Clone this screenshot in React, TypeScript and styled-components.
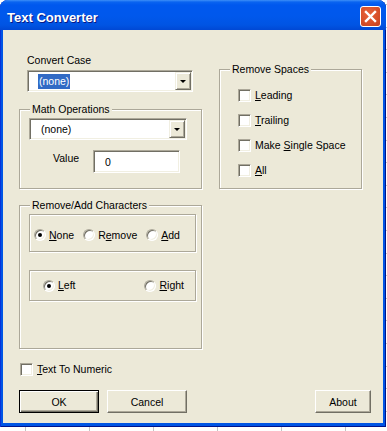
import React from "react";
import styled, { createGlobalStyle } from "styled-components";

const GlobalStyle = createGlobalStyle`
  html, body { margin: 0; padding: 0; }
  body {
    width: 387px;
    height: 431px;
    overflow: hidden;
    background-color: #fff;
    background-image:
      repeating-linear-gradient(to right, transparent 0 25px, #c4c4c4 25px 26px, transparent 26px 64px),
      repeating-linear-gradient(to bottom, transparent 0 4px, #c4c4c4 4px 5px, transparent 5px 22.6px);
    font-family: "Liberation Sans", Arial, sans-serif;
    font-size: 10.5px;
    color: #000;
  }
`;

const Window = styled.div`
  width: 386px;
  height: 427px;
  display: flex;
  flex-direction: column;
  background: #0055e5;
  border-radius: 8px 8px 0 0;
  box-shadow: inset 1px 0 0 #0831d9, inset -1px 0 0 #00138c, inset 0 -1px 0 #00138c;
  overflow: hidden;
`;

const TitleBar = styled.div`
  height: 30px;
  flex: none;
  display: flex;
  align-items: flex-start;
  justify-content: space-between;
  padding: 0 5px 0 7px;
  background: linear-gradient(
    180deg,
    #3d8ff7 0px,
    #0a64f0 2px,
    #0058ee 5px,
    #0058ec 16px,
    #0054e3 25px,
    #0048d4 30px
  );
`;

const Title = styled.div`
  margin-top: 10px;
  line-height: 16px;
  font-family: "Liberation Sans", Arial, sans-serif;
  font-weight: bold;
  font-size: 13px;
  color: #fff;
  text-shadow: 1px 1px 0 #0a1883;
`;

const CloseButton = styled.div`
  margin-top: 6px;
  width: 21px;
  height: 21px;
  box-sizing: border-box;
  border: 1px solid #fff;
  border-radius: 3px;
  background: radial-gradient(circle at 40% 35%, #e8643c 0%, #d8502a 55%, #c04020 100%);
  display: flex;
  align-items: center;
  justify-content: center;
`;

const Client = styled.div`
  flex: 1;
  margin: 0 3px 4px;
  background: #ece9d8;
  display: flex;
  flex-direction: column;
  padding: 0 12px 0 16px;
`;

const TopRow = styled.div`
  display: flex;
  align-items: flex-start;
  gap: 17px;
`;

const LeftColumn = styled.div`
  width: 183px;
  padding-top: 24px;
  display: flex;
  flex-direction: column;
`;

const RightColumn = styled.div`
  width: 143px;
  margin-top: 39px;
  display: flex;
  flex-direction: column;
`;

const FieldLabel = styled.div`
  line-height: 13px;
  margin-left: 8px;
`;

const Combo = styled.div<{ $width: number; $top: number; $left: number }>`
  width: ${(p) => p.$width}px;
  height: 22px;
  margin: ${(p) => p.$top}px 0 0 ${(p) => p.$left}px;
  box-sizing: border-box;
  display: flex;
  align-items: center;
  background: #fff;
  border: 1px solid;
  border-color: #aca899 #fff #fff #aca899;
  box-shadow: inset 1px 1px 0 #716f64, inset -1px -1px 0 #f1efe2;
  padding: 1px;
`;

const ComboValue = styled.span<{ $selected?: boolean }>`
  margin-left: 9px;
  padding: 0 1px;
  line-height: 15px;
  background: ${(p) => (p.$selected ? "#316ac5" : "transparent")};
  color: ${(p) => (p.$selected ? "#fff" : "#000")};
`;

const DropButton = styled.span`
  margin-left: auto;
  width: 16px;
  height: 18px;
  box-sizing: border-box;
  background: #ece9d8;
  border: 1px solid;
  border-color: #f1efe2 #716f64 #716f64 #f1efe2;
  box-shadow: inset 1px 1px 0 #fff, inset -1px -1px 0 #aca899;
  display: flex;
  align-items: center;
  justify-content: center;

  &::after {
    content: "";
    width: 0;
    height: 0;
    border-left: 3px solid transparent;
    border-right: 3px solid transparent;
    border-top: 3px solid #000;
    margin-top: 1px;
  }
`;

const Group = styled.div<{ $top: number }>`
  margin-top: ${(p) => p.$top}px;
  display: flex;
  flex-direction: column;
  border: 1px solid #aca899;
  box-shadow: inset 1px 1px 0 #fff, 1px 1px 0 #fff;
`;

const Caption = styled.span`
  align-self: flex-start;
  margin: -7px 0 0 10px;
  padding: 0 2px;
  line-height: 13px;
  background: #ece9d8;
`;

const GroupBody = styled.div<{ $pad: string }>`
  display: flex;
  flex-direction: column;
  padding: ${(p) => p.$pad};
`;

const ValueRow = styled.div`
  display: flex;
  align-items: flex-start;
  margin-top: 10px;
`;

const ValueLabel = styled.span`
  width: 40px;
  margin-left: 24px;
  padding-top: 2px;
  line-height: 13px;
`;

const TextField = styled.div`
  width: 87px;
  height: 23px;
  box-sizing: border-box;
  background: #fff;
  border: 1px solid;
  border-color: #aca899 #fff #fff #aca899;
  box-shadow: inset 1px 1px 0 #716f64, inset -1px -1px 0 #f1efe2;
  padding-left: 11px;
  display: flex;
  align-items: center;
`;

const Panel = styled.div<{ $top: number; $height: number; $pad: string; $spread?: boolean }>`
  margin-top: ${(p) => p.$top}px;
  height: ${(p) => p.$height}px;
  box-sizing: border-box;
  width: 167px;
  border: 1px solid #aca899;
  box-shadow: inset 1px 1px 0 #fff, 1px 1px 0 #fff;
  display: flex;
  align-items: center;
  justify-content: ${(p) => (p.$spread ? "space-between" : "flex-start")};
  gap: 9px;
  padding: ${(p) => p.$pad};
`;

const Option = styled.label`
  display: flex;
  align-items: center;
  gap: 3px;
  line-height: 13px;
`;

const RadioCircle = styled.span<{ $checked?: boolean }>`
  width: 12px;
  height: 12px;
  box-sizing: border-box;
  border-radius: 50%;
  border: 1px solid;
  border-color: #aca899 #fff #fff #aca899;
  box-shadow: inset 1px 1px 0 #716f64, inset -1px -1px 0 #f1efe2;
  background: #fff;
  display: flex;
  align-items: center;
  justify-content: center;

  &::after {
    content: "";
    width: 4px;
    height: 4px;
    border-radius: 50%;
    background: ${(p) => (p.$checked ? "#000" : "transparent")};
  }
`;

const CheckList = styled.div`
  display: flex;
  flex-direction: column;
  gap: 12px;
`;

const CheckRow = styled.label<{ $top?: number; $left?: number }>`
  display: flex;
  align-items: center;
  gap: 4px;
  height: 13px;
  line-height: 13px;
  margin: ${(p) => p.$top ?? 0}px 0 0 ${(p) => p.$left ?? 0}px;
`;

const CheckBox = styled.span`
  width: 13px;
  height: 13px;
  flex: none;
  box-sizing: border-box;
  background: #fff;
  border: 1px solid;
  border-color: #aca899 #fff #fff #aca899;
  box-shadow: inset 1px 1px 0 #716f64, inset -1px -1px 0 #f1efe2;
`;

const ButtonRow = styled.div`
  display: flex;
  gap: 8px;
  margin-top: 14px;
`;

const PushButton = styled.div<{ $width: number; $default?: boolean; $push?: boolean }>`
  width: ${(p) => p.$width}px;
  height: 23px;
  box-sizing: border-box;
  margin-left: ${(p) => (p.$push ? "auto" : "0")};
  background: #ece9d8;
  display: flex;
  align-items: center;
  justify-content: center;
  border: 1px solid;
  border-color: ${(p) => (p.$default ? "#000" : "#fff #716f64 #716f64 #fff")};
  box-shadow: ${(p) =>
    p.$default
      ? "inset 1px 1px 0 #fff, inset -1px -1px 0 #716f64, inset -2px -2px 0 #aca899"
      : "inset -1px -1px 0 #aca899"};
`;

const Key = styled.u`
  text-decoration-thickness: 1px;
  text-underline-offset: 1px;
`;

const CloseIcon = () => (
  <svg width="13" height="13" viewBox="0 0 13 13">
    <path d="M2 2 L11 11 M11 2 L2 11" stroke="#fff" strokeWidth="2.4" strokeLinecap="square" />
  </svg>
);

const Radio = ({ checked, children }: { checked?: boolean; children: React.ReactNode }) => (
  <Option>
    <RadioCircle $checked={checked} />
    <span>{children}</span>
  </Option>
);

export default function App() {
  return (
    <>
      <GlobalStyle />
      <Window>
        <TitleBar>
          <Title>Text Converter</Title>
          <CloseButton>
            <CloseIcon />
          </CloseButton>
        </TitleBar>
        <Client>
          <TopRow>
            <LeftColumn>
              <FieldLabel>Convert Case</FieldLabel>
              <Combo $width={166} $top={3} $left={8}>
                <ComboValue $selected>(none)</ComboValue>
                <DropButton />
              </Combo>

              <Group $top={17}>
                <Caption>Math Operations</Caption>
                <GroupBody $pad="2px 0 15px 9px">
                  <Combo $width={158} $top={0} $left={0}>
                    <ComboValue>(none)</ComboValue>
                    <DropButton />
                  </Combo>
                  <ValueRow>
                    <ValueLabel>Value</ValueLabel>
                    <TextField>0</TextField>
                  </ValueRow>
                </GroupBody>
              </Group>

              <Group $top={16}>
                <Caption>Remove/Add Characters</Caption>
                <GroupBody $pad="2px 0 47px 9px">
                  <Panel $top={0} $height={38} $pad="4px 0 0 4px">
                    <Radio checked>
                      <Key>N</Key>one
                    </Radio>
                    <Radio>
                      R<Key>e</Key>move
                    </Radio>
                    <Radio>
                      <Key>A</Key>dd
                    </Radio>
                  </Panel>
                  <Panel $top={18} $height={31} $pad="0 11px 0 13px" $spread>
                    <Radio checked>
                      <Key>L</Key>eft
                    </Radio>
                    <Radio>
                      <Key>R</Key>ight
                    </Radio>
                  </Panel>
                </GroupBody>
              </Group>
            </LeftColumn>

            <RightColumn>
              <Group $top={0}>
                <Caption>Remove Spaces</Caption>
                <GroupBody $pad="13px 0 11px 18px">
                  <CheckList>
                    <CheckRow>
                      <CheckBox />
                      <span>
                        <Key>L</Key>eading
                      </span>
                    </CheckRow>
                    <CheckRow>
                      <CheckBox />
                      <span>
                        <Key>T</Key>railing
                      </span>
                    </CheckRow>
                    <CheckRow>
                      <CheckBox />
                      <span>
                        Make <Key>S</Key>ingle Space
                      </span>
                    </CheckRow>
                    <CheckRow>
                      <CheckBox />
                      <span>
                        <Key>A</Key>ll
                      </span>
                    </CheckRow>
                  </CheckList>
                </GroupBody>
              </Group>
            </RightColumn>
          </TopRow>

          <CheckRow $top={14} $left={1}>
            <CheckBox />
            <span>
              <Key>T</Key>ext To Numeric
            </span>
          </CheckRow>

          <ButtonRow>
            <PushButton $width={80} $default>
              OK
            </PushButton>
            <PushButton $width={80}>Cancel</PushButton>
            <PushButton $width={56} $push>
              About
            </PushButton>
          </ButtonRow>
        </Client>
      </Window>
    </>
  );
}
